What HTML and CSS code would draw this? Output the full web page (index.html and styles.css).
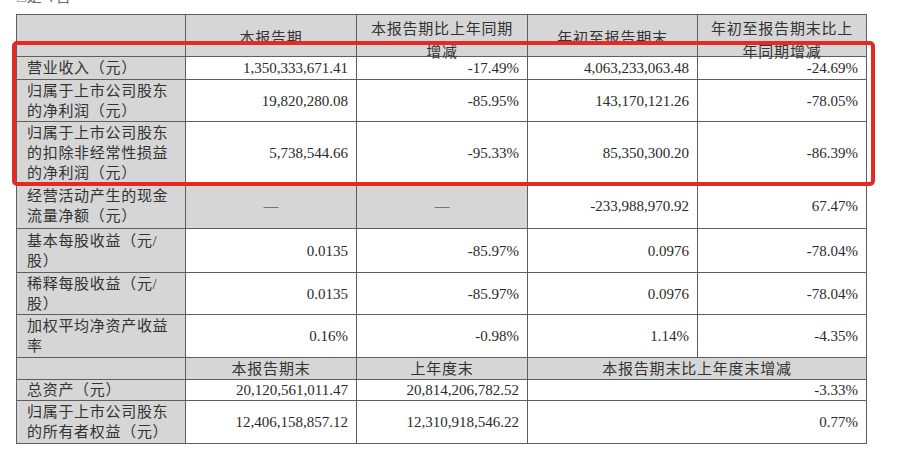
FILE: index.html
```html
<!DOCTYPE html>
<html lang="zh-CN">
<head>
<meta charset="utf-8">
<title>主要会计数据和财务指标</title>
<link rel="stylesheet" href="styles.css">
</head>
<body>
<div class="page">
  <div class="note">□是 √否</div>
  <div class="fin">
    <div class="c g"></div>
    <div class="c g hd mid"><span>本报告期</span></div>
    <div class="c g hd two"><span>本报告期比上年同期<br>增减</span></div>
    <div class="c g hd mid"><span>年初至报告期末</span></div>
    <div class="c g hd two"><span>年初至报告期末比上<br>年同期增减</span></div>

    <div class="c g lb">营业收入（元）</div>
    <div class="c v">1,350,333,671.41</div>
    <div class="c v">-17.49%</div>
    <div class="c v">4,063,233,063.48</div>
    <div class="c v">-24.69%</div>

    <div class="c g lb">归属于上市公司股东<br>的净利润（元）</div>
    <div class="c v">19,820,280.08</div>
    <div class="c v">-85.95%</div>
    <div class="c v">143,170,121.26</div>
    <div class="c v">-78.05%</div>

    <div class="c g lb">归属于上市公司股东<br>的扣除非经常性损益<br>的净利润（元）</div>
    <div class="c v">5,738,544.66</div>
    <div class="c v">-95.33%</div>
    <div class="c v">85,350,300.20</div>
    <div class="c v">-86.39%</div>

    <div class="c g lb">经营活动产生的现金<br>流量净额（元）</div>
    <div class="c g ct">—</div>
    <div class="c g ct">—</div>
    <div class="c v">-233,988,970.92</div>
    <div class="c v">67.47%</div>

    <div class="c g lb">基本每股收益（元/<br>股）</div>
    <div class="c v">0.0135</div>
    <div class="c v">-85.97%</div>
    <div class="c v">0.0976</div>
    <div class="c v">-78.04%</div>

    <div class="c g lb">稀释每股收益（元/<br>股）</div>
    <div class="c v">0.0135</div>
    <div class="c v">-85.97%</div>
    <div class="c v">0.0976</div>
    <div class="c v">-78.04%</div>

    <div class="c g lb">加权平均净资产收益<br>率</div>
    <div class="c v">0.16%</div>
    <div class="c v">-0.98%</div>
    <div class="c v">1.14%</div>
    <div class="c v">-4.35%</div>

    <div class="c g"></div>
    <div class="c g ct hd">本报告期末</div>
    <div class="c g ct hd">上年度末</div>
    <div class="c g ct hd span2">本报告期末比上年度末增减</div>

    <div class="c g lb">总资产（元）</div>
    <div class="c v">20,120,561,011.47</div>
    <div class="c v">20,814,206,782.52</div>
    <div class="c v span2">-3.33%</div>

    <div class="c g lb">归属于上市公司股东<br>的所有者权益（元）</div>
    <div class="c v">12,406,158,857.12</div>
    <div class="c v">12,310,918,546.22</div>
    <div class="c v span2">0.77%</div>
  </div>
  <div class="mark"></div>
</div>
</body>
</html>
```
FILE: styles.css
```css
html, body {
  margin: 0;
  padding: 0;
  background: #ffffff;
}

body {
  font-family: "Liberation Serif", "Noto Sans CJK SC", serif;
  color: #2a2a2a;
}

.page {
  display: flow-root;
  position: relative;
  width: 900px;
  height: 466px;
  overflow: hidden;
}

.note {
  margin: -10px 0 9px 17px;
  height: 15px;
  font-size: 15px;
  line-height: 15px;
  color: #6a6a6a;
  letter-spacing: 0.7px;
}

.fin {
  display: grid;
  width: max-content;
  margin-left: 16px;
  grid-template-columns: 169px 171px 171px 170px 169px;
  grid-template-rows: 42px 23px 42px 62px 45px 44px 42px 43px 22px 21px 43px;
  border-top: 1px solid #5e5e5e;
  border-left: 1px solid #5e5e5e;
}

.c {
  box-sizing: border-box;
  border-right: 1px solid #5e5e5e;
  border-bottom: 1px solid #5e5e5e;
  display: flex;
  align-items: center;
  font-size: 15px;
  line-height: 20px;
  white-space: nowrap;
}

.g {
  background: #d6d6d6;
}

.lb {
  padding-left: 10px;
  letter-spacing: 0.7px;
  color: #333333;
}

.v {
  justify-content: flex-end;
  padding-right: 8px;
}

.ct {
  justify-content: center;
}

.hd {
  justify-content: center;
  text-align: center;
  letter-spacing: 0.8px;
  color: #333333;
}

.mid {
  padding-top: 5px;
}

.two {
  align-items: flex-start;
  padding-top: 3px;
  line-height: 23px;
}

.span2 {
  grid-column: span 2;
}

.mark {
  position: absolute;
  left: 12px;
  top: 41px;
  width: 863px;
  height: 145px;
  box-sizing: border-box;
  border: 4px solid #e42a22;
  border-radius: 5px;
}
```
